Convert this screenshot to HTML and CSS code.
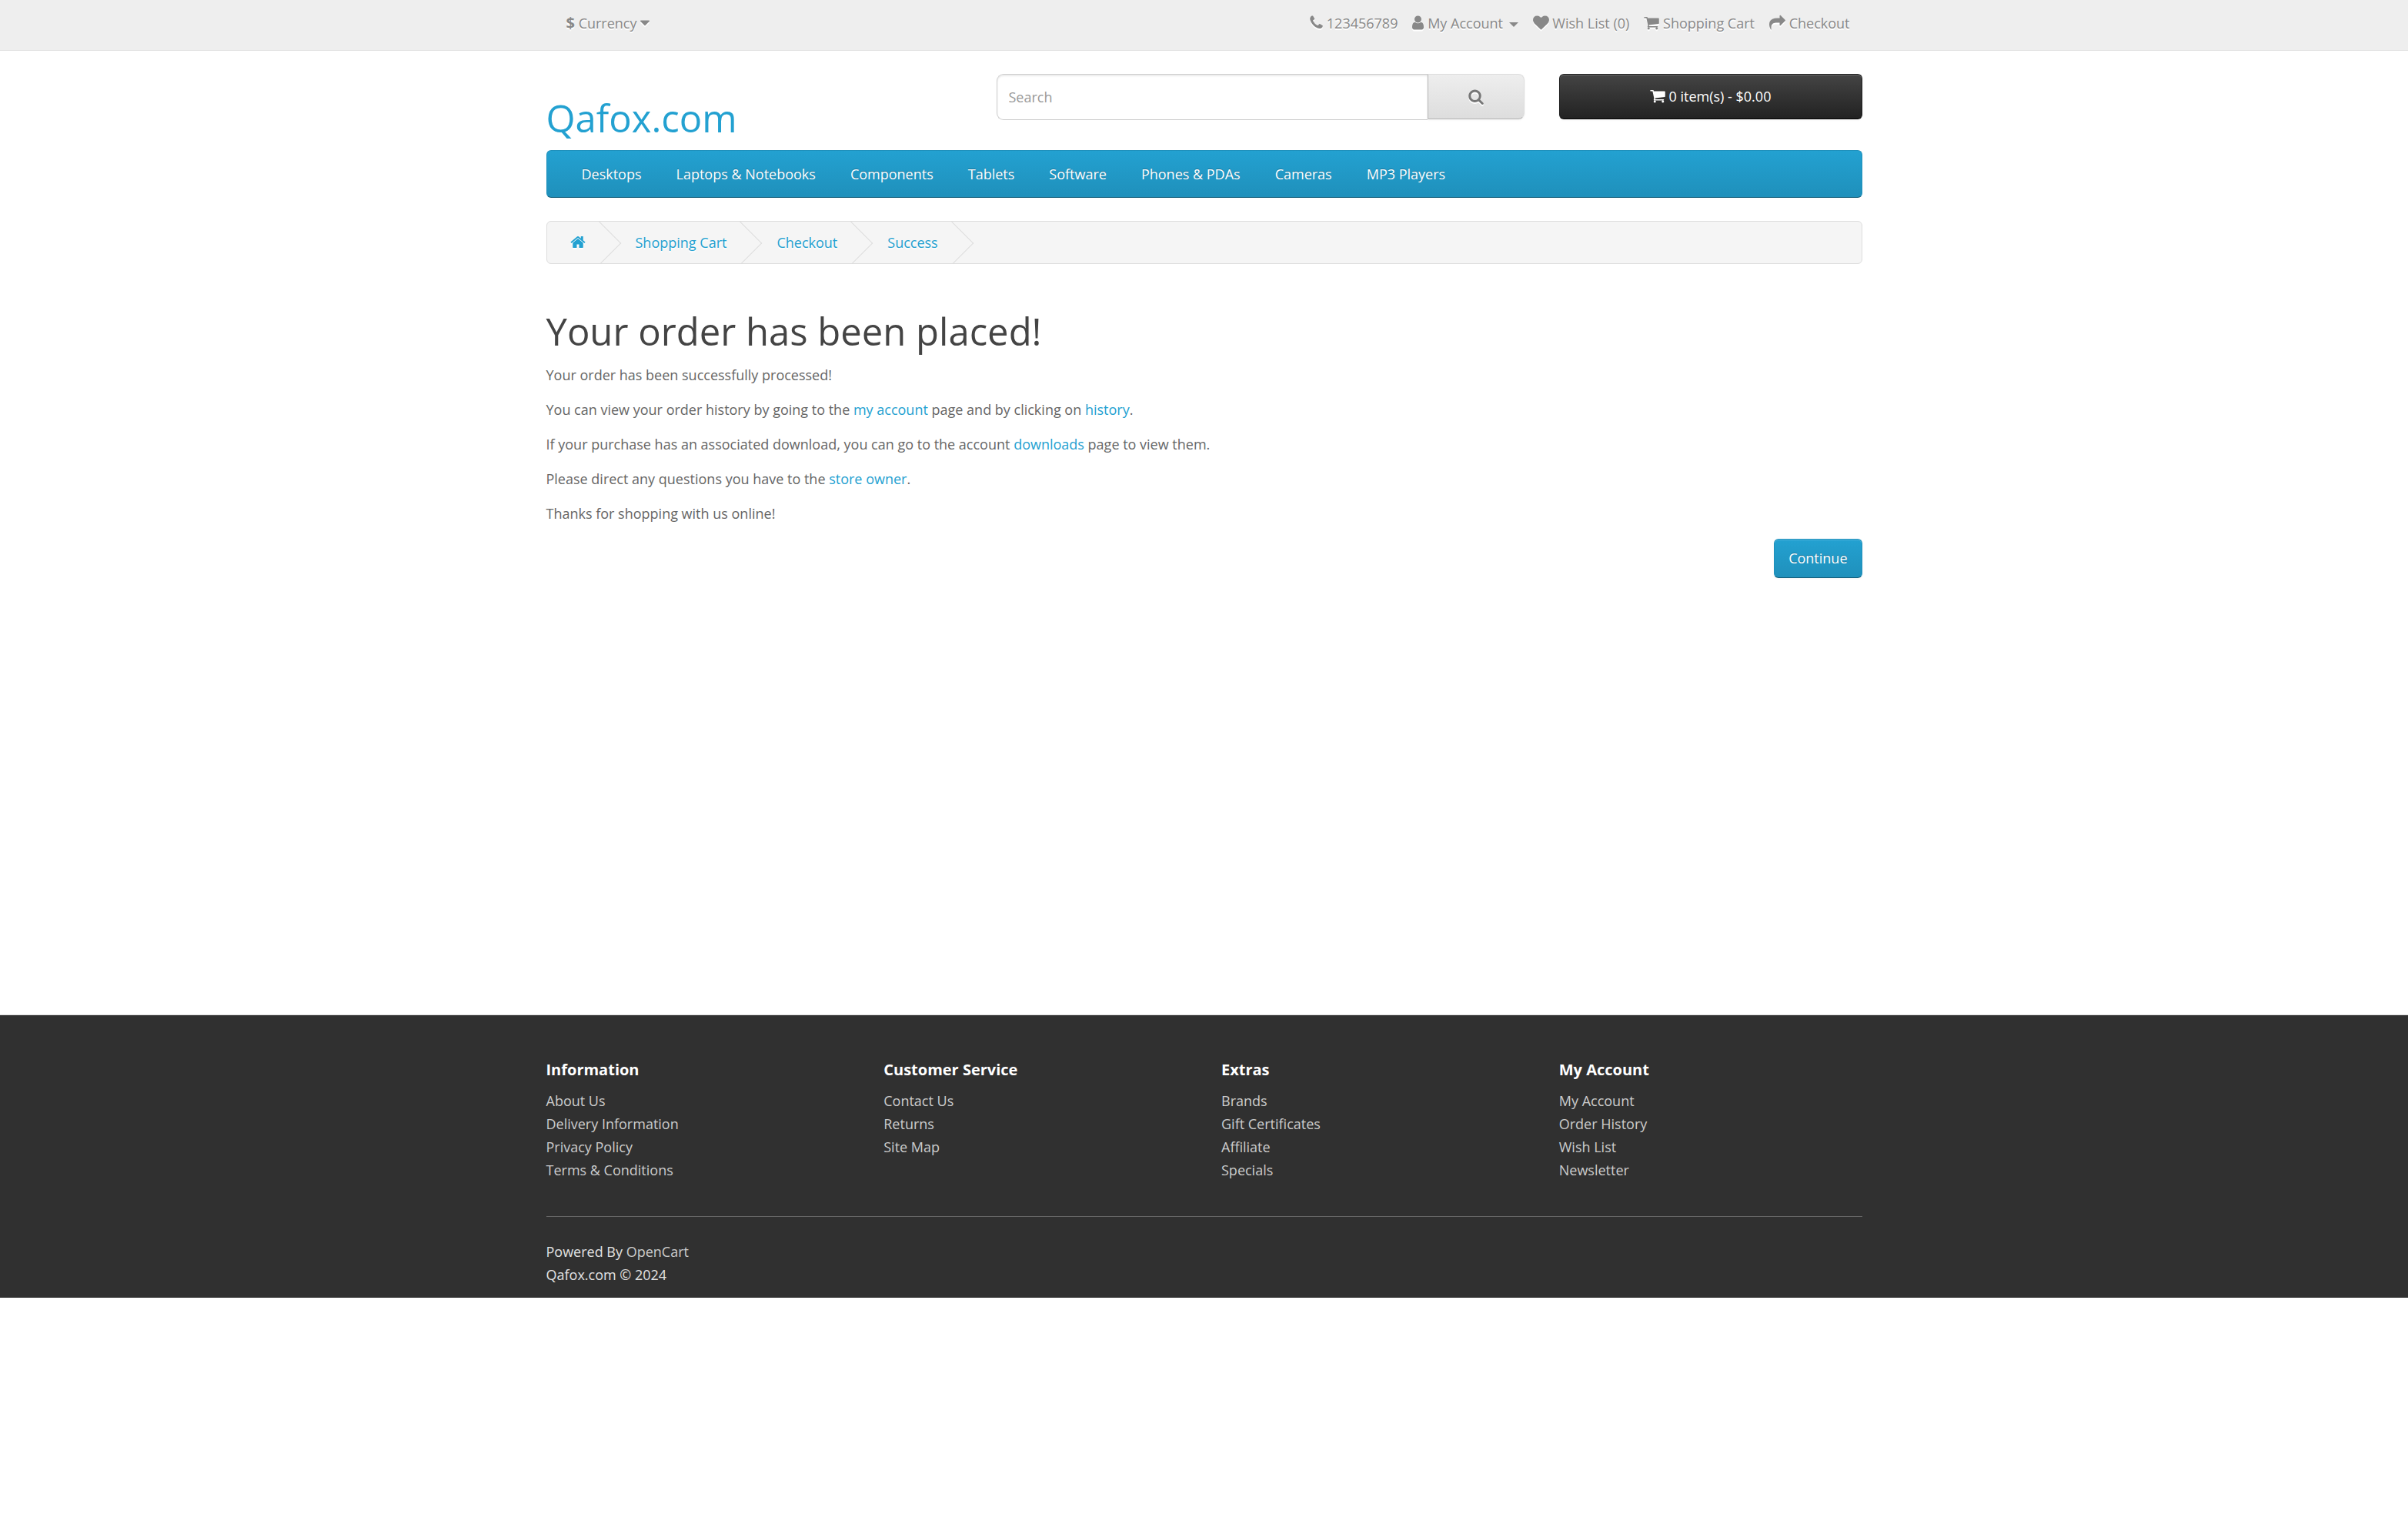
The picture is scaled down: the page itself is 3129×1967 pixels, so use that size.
FILE: index.html
```html
<!DOCTYPE html>
<html lang="en">
<head>
<meta charset="utf-8">
<meta name="viewport" content="width=device-width, initial-scale=1">
<title>Your order has been placed!</title>
<link rel="stylesheet" href="styles.css">
</head>
<body>
<svg class="sprite" aria-hidden="true">
  <symbol id="i-cart" viewBox="64 0 1664 1792"><path d="M704 1536q0 52-38 90t-90 38-90-38-38-90 38-90 90-38 90 38 38 90zm896 0q0 52-38 90t-90 38-90-38-38-90 38-90 90-38 90 38 38 90zm128-1088v512q0 24-16.5 42.5t-40.5 21.5l-1044 122q13 60 13 70 0 16-24 64h920q26 0 45 19t19 45-19 45-45 19h-1024q-26 0-45-19t-19-45q0-11 8-31.5t16-36 21.5-40 15.5-29.5l-177-823h-204q-26 0-45-19t-19-45 19-45 45-19h256q16 0 28.5 6.5t19.5 15.5 13 24.5 8 26 5.5 29.5 4.5 26h1201q26 0 45 19t19 45z"/></symbol>
</svg>

<nav class="topbar" aria-label="Account">
  <div class="container topbar-inner">
    <button class="currency" type="button"><strong>$</strong> <span>Currency</span> <svg class="icon icon-caret" viewBox="384 0 1024 1792"><path d="M1408 704q0 26-19 45l-448 448q-19 19-45 19t-45-19l-448-448q-19-19-19-45t19-45 45-19h896q26 0 45 19t19 45z"/></svg></button>
    <ul class="top-links">
      <li><a href="#contact" aria-label="Contact"><svg class="icon icon-phone" viewBox="192 0 1408 1792"><path d="M1600 1240q0 27-10 70.500t-21 68.500q-21 50-122 106-94 51-186 51-27 0-53-3.500t-57-12.500-47-14.500-55.500-20.500-49.500-18q-98-35-175-83-127-79-264-216t-216-264q-48-77-83-175-3-9-18-49.500t-20.500-55.500-14.500-47-12.500-57-3.500-53q0-92 51-186 56-101 106-122 25-11 68.500-21t70.500-10q14 0 21 3 18 6 53 76 11 19 30 54t35 63.500 31 53.500q3 4 17.500 25t21.500 35.500 7 28.500q0 20-28.500 50t-62 55-62 53-28.500 46q0 9 5 22.500t8.500 20.500 14 24 11.500 19q76 137 174 235t235 174q2 1 19 11.500t24 14 20.500 8.500 22.500 5q18 0 46-28.500t53-62 55-62 50-28.500q14 0 28.500 7t35.500 21.500 25 17.500q25 15 53.500 31t63.500 35 54 30q70 35 76 53 3 7 3 21z"/></svg></a> <span>123456789</span></li>
      <li><a href="#account"><svg class="icon icon-user" viewBox="256 0 1280 1792"><path d="M1536 1399q0 109-62.500 187t-150.500 78h-854q-88 0-150.500-78t-62.500-187q0-85 8.500-160.500t31.500-152 58.500-131 94-89 134.500-34.500q131 128 313 128t313-128q76 0 134.500 34.500t94 89 58.500 131 31.500 152 8.500 160.500zm-256-887q0 159-112.500 271.500t-271.500 112.500-271.500-112.500-112.500-271.500 112.500-271.500 271.500-112.500 271.500 112.500 112.500 271.500z"/></svg> <span>My Account</span> <i class="caret"></i></a></li>
      <li><a href="#wishlist"><svg class="icon icon-wide" viewBox="0 0 1792 1792"><path d="M896 1664q-26 0-44-18l-624-602q-10-8-27.500-26t-55.500-65.500-68-97.500-53.500-121-23.500-138q0-220 127-344t351-124q62 0 126.500 21.500t120 58 95.500 68.500 76 68q36-36 76-68t95.500-68.500 120-58 126.500-21.500q224 0 351 124t127 344q0 221-229 450l-623 600q-18 18-44 18z"/></svg> <span>Wish List (0)</span></a></li>
      <li><a href="#cart"><svg class="icon"><use href="#i-cart"/></svg> <span>Shopping Cart</span></a></li>
      <li><a href="#checkout"><svg class="icon icon-wide" viewBox="0 0 1792 1792"><path d="M1792 640q0 26-19 45l-512 512q-19 19-45 19t-45-19-19-45v-256h-224q-98 0-175.500 6t-154 21.500-133 42.500-105.500 69.500-80 101-48.500 138.500-17.500 181q0 55 5 123 0 6 2.500 23.500t2.500 26.500q0 15-8.500 25t-23.500 10q-16 0-28-17-7-9-13-22t-13.500-30-10.500-24q-127-285-127-451 0-199 53-333 162-403 875-403h224v-256q0-26 19-45t45-19 45 19l512 512q19 19 19 45z"/></svg> <span>Checkout</span></a></li>
    </ul>
  </div>
</nav>

<header class="container header">
  <div class="logo"><a href="#home">Qafox.com</a></div>
  <form class="search" role="search">
    <input class="search-input" type="text" name="search" placeholder="Search" aria-label="Search">
    <button class="search-button" type="button" aria-label="Search"><svg class="icon" viewBox="64 0 1664 1792"><path d="M1216 832q0-185-131.500-316.500t-316.500-131.500-316.500 131.500-131.500 316.500 131.500 316.500 316.500 131.500 316.500-131.500 131.500-316.500zm512 832q0 52-38 90t-90 38q-54 0-90-38l-343-342q-179 124-399 124-143 0-273.500-55.500t-225-150-150-225-55.500-273.500 55.500-273.500 150-225 225-150 273.500-55.500 273.500 55.500 225 150 150 225 55.500 273.500q0 220-124 399l343 343q37 37 37 90z"/></svg></button>
  </form>
  <button class="cart-button" type="button"><svg class="icon"><use href="#i-cart"/></svg> <span>0 item(s) - $0.00</span></button>
</header>

<div class="container">
  <nav class="menu" aria-label="Categories">
    <a href="#desktops">Desktops</a>
    <a href="#laptops">Laptops &amp; Notebooks</a>
    <a href="#components">Components</a>
    <a href="#tablets">Tablets</a>
    <a href="#software">Software</a>
    <a href="#phones">Phones &amp; PDAs</a>
    <a href="#cameras">Cameras</a>
    <a href="#mp3">MP3 Players</a>
  </nav>

  <ul class="breadcrumb">
    <li><a href="#home" aria-label="Home"><svg class="icon" viewBox="64 0 1664 1792"><path d="M1472 992v480q0 26-19 45t-45 19h-384v-384h-256v384h-384q-26 0-45-19t-19-45v-480q0-1 .5-3t.5-3l575-474 575 474q1 2 1 6zm223-69l-62 74q-8 9-21 11h-3q-13 0-21-7l-692-577-692 577q-12 8-24 7-13-2-21-11l-62-74q-8-10-7-23.500t11-21.500l719-599q32-26 76-26t76 26l244 204v-195q0-14 9-23t23-9h192q14 0 23 9t9 23v408l219 182q10 8 11 21.500t-7 23.500z"/></svg></a></li>
    <li><a href="#cart">Shopping Cart</a></li>
    <li><a href="#checkout">Checkout</a></li>
    <li><a href="#success">Success</a></li>
  </ul>

  <main class="content">
    <h1>Your order has been placed!</h1>
    <p>Your order has been successfully processed!</p>
    <p>You can view your order history by going to the <a href="#account">my account</a> page and by clicking on <a href="#history">history</a>.</p>
    <p>If your purchase has an associated download, you can go to the account <a href="#downloads">downloads</a> page to view them.</p>
    <p>Please direct any questions you have to the <a href="#contact">store owner</a>.</p>
    <p>Thanks for shopping with us online!</p>
    <div class="buttons"><a class="primary-button" href="#home">Continue</a></div>
  </main>
</div>

<footer class="footer">
  <div class="container">
    <div class="footer-columns">
      <section>
        <h2>Information</h2>
        <ul>
          <li><a href="#about">About Us</a></li>
          <li><a href="#delivery">Delivery Information</a></li>
          <li><a href="#privacy">Privacy Policy</a></li>
          <li><a href="#terms">Terms &amp; Conditions</a></li>
        </ul>
      </section>
      <section>
        <h2>Customer Service</h2>
        <ul>
          <li><a href="#contact">Contact Us</a></li>
          <li><a href="#returns">Returns</a></li>
          <li><a href="#sitemap">Site Map</a></li>
        </ul>
      </section>
      <section>
        <h2>Extras</h2>
        <ul>
          <li><a href="#brands">Brands</a></li>
          <li><a href="#gifts">Gift Certificates</a></li>
          <li><a href="#affiliate">Affiliate</a></li>
          <li><a href="#specials">Specials</a></li>
        </ul>
      </section>
      <section>
        <h2>My Account</h2>
        <ul>
          <li><a href="#account">My Account</a></li>
          <li><a href="#history">Order History</a></li>
          <li><a href="#wishlist">Wish List</a></li>
          <li><a href="#newsletter">Newsletter</a></li>
        </ul>
      </section>
    </div>
    <hr>
    <p>Powered By <a href="#opencart">OpenCart</a><br>Qafox.com © 2024</p>
  </div>
</footer>
</body>
</html>
```
FILE: styles.css
```css
* {
  box-sizing: border-box;
}

body {
  margin: 0;
  background: #fff;
  color: #666;
  font-family: "Open Sans", sans-serif;
  font-size: 18px;
  line-height: 30px;
}

a {
  color: #23a1d1;
  text-decoration: none;
}

ul {
  list-style: none;
  margin: 0;
  padding: 0;
}

button,
input {
  font: inherit;
}

button {
  cursor: pointer;
}

.sprite {
  display: none;
}

.container {
  max-width: 1710px;
  margin: 0 auto;
}

.icon {
  width: 20px;
  height: 21px;
  fill: currentColor;
  vertical-align: -3px;
}

.icon-wide {
  width: 21px;
}

.icon-phone {
  width: 17px;
}

.icon-user {
  width: 15px;
}

.icon-caret {
  width: 12px;
}

.caret {
  display: inline-block;
  margin-left: 3px;
  vertical-align: middle;
  border-top: 6px solid;
  border-left: 6px solid transparent;
  border-right: 6px solid transparent;
}

/* Top bar */
.topbar {
  padding: 15px 0 20px;
  background: #eee;
  border-bottom: 1px solid #e2e2e2;
  color: #888;
  text-shadow: 0 2px 0 #fff;
}

.topbar .icon {
  filter: drop-shadow(0 2px 0 #fff);
}

.topbar a {
  color: inherit;
}

.topbar-inner {
  display: flex;
  flex-wrap: wrap;
  justify-content: space-between;
  padding: 0 16px 0 26px;
}

.currency {
  padding: 0;
  border: 0;
  background: none;
  color: inherit;
  text-shadow: inherit;
}

.currency strong {
  font-size: 20px;
  line-height: 20px;
}

.top-links {
  display: flex;
  flex-wrap: wrap;
  column-gap: 19px;
}

/* Header */
.header {
  display: grid;
  grid-template-columns: repeat(12, 1fr);
  column-gap: 45px;
  align-items: start;
  padding-top: 30px;
}

.logo {
  grid-column: span 4;
  margin: 30px 0 15px;
  font-size: 49px;
  line-height: 54px;
}

.search {
  grid-column: span 5;
  display: flex;
  align-items: flex-start;
}

.search-input {
  flex: 1;
  min-width: 0;
  height: 60px;
  padding: 0 15px;
  border: 1px solid #ccc;
  border-right: 0;
  border-radius: 9px 0 0 9px;
  background: #fff;
  box-shadow: inset 0 2px 2px rgba(0, 0, 0, 0.08);
  color: #555;
}

.search-input::placeholder {
  color: #999;
  opacity: 1;
}

.search-button {
  width: 126px;
  height: 59px;
  padding: 0;
  border: 1px solid;
  border-color: #ddd #ddd #b3b3b3 #b7b7b7;
  border-radius: 0 8px 8px 0;
  background: linear-gradient(#eee, #ddd);
  box-shadow: 0 1px 3px rgba(0, 0, 0, 0.05);
  color: #777;
}

.search-button .icon {
  filter: drop-shadow(0 2px 0 #fff);
}

.cart-button {
  grid-column: span 3;
  height: 59px;
  padding: 0 15px 2px;
  border: 1px solid;
  border-color: #1c1c1c #1c1c1c #000;
  border-radius: 6px;
  background: linear-gradient(#444, #222);
  box-shadow: inset 0 1px 0 rgba(255, 255, 255, 0.2), 0 1px 3px rgba(0, 0, 0, 0.05);
  color: #fff;
}

/* Category menu */
.menu {
  display: flex;
  flex-wrap: wrap;
  column-gap: 45px;
  padding: 15px 45px;
  border: 1px solid;
  border-color: #1f90bb #1f90bb #145e7a;
  border-radius: 6px;
  background: linear-gradient(#23a1d1, #1f90bb);
}

.menu a {
  color: #fff;
  text-shadow: 0 -1px 0 rgba(0, 0, 0, 0.25);
}

/* Breadcrumb */
.breadcrumb {
  display: flex;
  gap: 5px;
  margin: 30px 0;
  overflow: hidden;
  border: 1px solid #ddd;
  border-radius: 6px;
  background: #f5f5f5;
  text-shadow: 0 2px 0 #fff;
}

.breadcrumb li {
  position: relative;
  padding: 12px 30px;
}

.breadcrumb li::after {
  content: "";
  position: absolute;
  top: 8px;
  right: -8px;
  width: 39px;
  height: 39px;
  border-right: 1px solid #ddd;
  border-bottom: 1px solid #ddd;
  transform: rotate(-45deg);
  pointer-events: none;
}

.breadcrumb .icon {
  filter: drop-shadow(0 2px 0 #fff);
}

/* Content */
.content {
  display: flow-root;
  min-height: 900px;
}

.content h1 {
  margin: 30px 0 15px;
  color: #444;
  font-size: 49px;
  font-weight: 400;
  line-height: 54px;
}

.content p {
  margin: 0 0 15px;
}

.buttons {
  display: flex;
  justify-content: flex-end;
  margin: 18px 0;
}

.primary-button {
  padding: 9px 18px 10px;
  border: 1px solid;
  border-color: #1f90bb #1f90bb #145e7a;
  border-radius: 6px;
  background: linear-gradient(#23a1d1, #1f90bb);
  box-shadow: inset 0 1px 0 rgba(255, 255, 255, 0.2), 0 1px 3px rgba(0, 0, 0, 0.05);
  color: #fff;
  text-shadow: 0 -1px 0 rgba(0, 0, 0, 0.25);
}

/* Footer */
.footer {
  margin-top: 45px;
  padding: 45px 0 15px;
  border-top: 1px solid #ddd;
  background: #303030;
  color: #e2e2e2;
}

.footer-columns {
  display: grid;
  grid-template-columns: repeat(4, 1fr);
  column-gap: 45px;
}

.footer h2 {
  margin: 15px 0;
  color: #fff;
  font-size: 20px;
  font-weight: 700;
  line-height: 21px;
}

.footer a {
  color: #ccc;
}

.footer hr {
  margin: 45px 0 30px;
  border: 0;
  border-top: 1px solid #666;
}

.footer p {
  margin: 0;
}

@media (max-width: 1755px) {
  .container {
    margin: 0 22px;
  }
}

@media (max-width: 1100px) {
  .logo,
  .search,
  .cart-button {
    grid-column: 1 / -1;
    margin-bottom: 15px;
  }

  .header {
    column-gap: 0;
  }

  .footer-columns {
    grid-template-columns: repeat(2, 1fr);
  }
}
```
